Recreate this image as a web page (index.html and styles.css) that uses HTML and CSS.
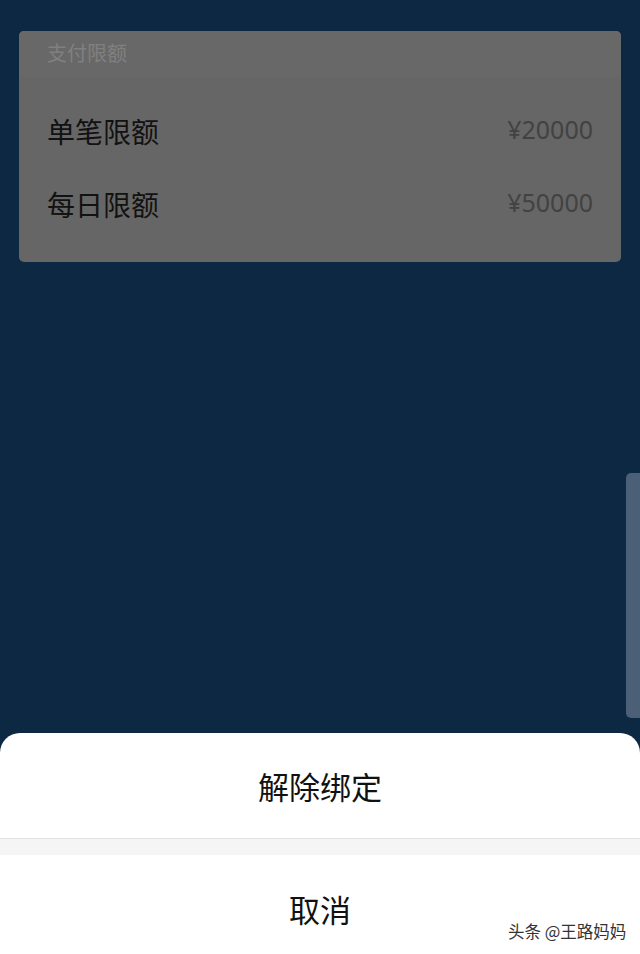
FILE: index.html
```html
<!DOCTYPE html>
<html lang="zh">
<head>
<meta charset="utf-8">
<link rel="stylesheet" href="styles.css">
</head>
<body>
<div class="page">
  <section class="card">
    <div class="card-head">支付限额</div>
    <div class="row"><span class="label">单笔限额</span><span class="value">¥20000</span></div>
    <div class="row"><span class="label">每日限额</span><span class="value">¥50000</span></div>
  </section>
</div>
<div class="scrollbar"></div>
<div class="sheet">
  <div class="sheet-btn first">解除绑定</div>
  <div class="sheet-gap"></div>
  <div class="sheet-btn cancel">取消</div>
</div>
<div class="watermark">头条 @王路妈妈</div>
</body>
</html>
```
FILE: styles.css
```css
html, body {
  margin: 0;
  padding: 0;
}
body {
  width: 640px;
  height: 954px;
  overflow: hidden;
  background: #0c2842;
  font-family: "Noto Sans CJK SC", "Noto Sans", sans-serif;
  position: relative;
}
.page {
  padding: 31px 19px 0;
}
.card {
  background: #666666;
  border-radius: 5px;
  height: 231px;
  overflow: hidden;
}
.card-head {
  height: 46px;
  box-sizing: border-box;
  padding: 0 0 3px 28px;
  display: flex;
  align-items: center;
  background: #686868;
  color: #808080;
  font-size: 20px;
}
.row {
  display: flex;
  justify-content: space-between;
  align-items: center;
  height: 73px;
  padding: 0 28px 0 28px;
}
.card-head + .row {
  margin-top: 17px;
}
.label {
  font-size: 28px;
  color: #121212;
}
.value {
  font-size: 25px;
  color: #424242;
  font-family: "Noto Sans", "DejaVu Sans", sans-serif;
  padding-bottom: 3px;
}
.scrollbar {
  position: absolute;
  left: 626px;
  top: 473px;
  width: 18px;
  height: 245px;
  background: #4b6076;
  border-radius: 5px;
}
.sheet {
  position: absolute;
  left: 0;
  right: 0;
  top: 733px;
  bottom: 0;
  background: #ffffff;
  border-radius: 20px 20px 0 0;
  display: flex;
  flex-direction: column;
}
.sheet-btn {
  display: flex;
  align-items: center;
  justify-content: center;
  font-size: 31px;
  color: #111111;
  flex-shrink: 0;
}
.sheet-btn.first {
  height: 105px;
  border-bottom: 1px solid #e3e3e3;
}
.sheet-gap {
  height: 16px;
  background: #f5f5f5;
  flex-shrink: 0;
}
.sheet-btn.cancel {
  height: 106px;
}
.watermark {
  position: absolute;
  left: 508px;
  top: 919px;
  font-size: 16.5px;
  color: #333333;
  text-shadow: 0 0 2px #fff, 0 0 1px #fff;
}
```
